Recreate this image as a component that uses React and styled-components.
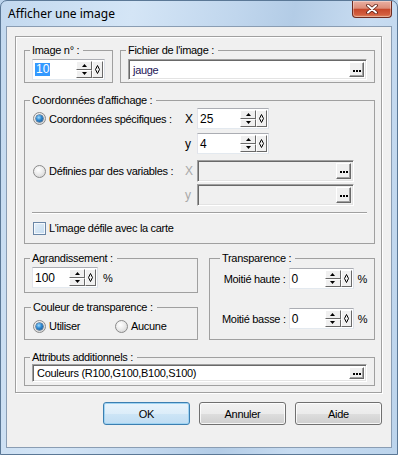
import styled, { createGlobalStyle } from "styled-components";

const GlobalStyle = createGlobalStyle`
  html, body {
    margin: 0;
    padding: 0;
    background: #bcd4ec;
  }
  body {
    font-family: "Liberation Sans", Arial, sans-serif;
    font-size: 11px;
    letter-spacing: -0.3px;
    color: #000;
  }
  * {
    box-sizing: border-box;
  }
`;

const Window = styled.div`
  width: 398px;
  height: 455px;
  display: flex;
  flex-direction: column;
  border: 1px solid #5b7896;
  border-radius: 7px 7px 0 0;
  background: linear-gradient(100deg, #c3d9ef 0%, #d4e5f6 28%, #c0d6ed 50%, #b3cce6 62%, #c8dcf1 78%, #bcd4ec 100%);
  overflow: hidden;
`;

const TitleBar = styled.div`
  height: 25px;
  flex: none;
  display: flex;
  align-items: flex-start;
  justify-content: space-between;
  padding-left: 7px;
`;

const Title = styled.span`
  font: 12px/25px "Noto Sans", "Open Sans", sans-serif;
  letter-spacing: 0;
  color: #000;
`;

const CloseButton = styled.div`
  width: 40px;
  height: 17px;
  margin-right: 5px;
  border: 1px solid #6e2b20;
  border-top: none;
  border-radius: 0 0 4px 4px;
  background: linear-gradient(#eab0a2 0%, #dc8d79 45%, #c7482b 52%, #d35f3f 85%, #e08a62 100%);
  box-shadow: inset 0 0 0 1px rgba(255, 255, 255, 0.35);
  display: flex;
  align-items: center;
  justify-content: center;
`;

const Client = styled.div`
  flex: 1;
  margin: 0 5px 6px 5px;
  border: 1px solid #8a9db3;
  background: #f0f0f0;
  display: flex;
  flex-direction: column;
  padding: 9px 9px 0 8px;
`;

const Panel = styled.div`
  border: 1px solid #a0a0a0;
  box-shadow: inset 1px 1px 0 #fff, 1px 1px 0 #fff;
  padding: 7px 6px 6px 8px;
  display: flex;
  flex-direction: column;
`;

const Row = styled.div`
  display: flex;
  gap: ${p => p.$gap || 0}px;
  margin-top: ${p => p.$mt || 0}px;
  align-items: stretch;
`;

const Column = styled.div`
  display: flex;
  flex-direction: column;
  gap: ${p => p.$gap || 0}px;
  width: ${p => p.$w}px;
`;

const Group = styled.fieldset`
  margin: 0;
  min-width: 0;
  width: ${p => (p.$w ? `${p.$w}px` : "auto")};
  flex: ${p => (p.$w ? "none" : 1)};
  padding: ${p => p.$pad || "2px 7px 2px 7px"};
  border: 1px solid #a0a0a0;
  display: flex;
  flex-direction: column;
  justify-content: ${p => p.$justify || "flex-start"};
`;

const Legend = styled.legend`
  padding: 0 4px 0 2px;
  margin-left: -2px;
  font-size: 11px;
  line-height: 13px;
  color: #000;
`;

const SpinBox = styled.div`
  width: ${p => p.$w}px;
  height: 21px;
  flex: none;
  display: flex;
  background: #fff;
  border: 1px solid;
  border-color: #abadb3 #dbdfe6 #e3e9ef #e2e3ea;
  padding: 1px;
`;

const SpinValue = styled.div`
  flex: 1;
  display: flex;
  align-items: center;
  padding-left: 1px;
  font-size: 12px;
  letter-spacing: 0;
  color: #000;
`;

const Selected = styled.span`
  background: #3399ff;
  color: #fff;
  line-height: 13px;
  padding: 0 1px;
`;

const Arrows = styled.div`
  width: 16px;
  display: flex;
  flex-direction: column;
`;

const ArrowButton = styled.div`
  flex: 1;
  background: #f0f0f0;
  border: 1px solid;
  border-color: #fff #696969 #696969 #fff;
  display: flex;
  align-items: center;
  justify-content: center;
`;

const ExtraButton = styled(ArrowButton)`
  flex: none;
  width: 11px;
`;

const Field = styled.div`
  width: ${p => (p.$w ? `${p.$w}px` : "auto")};
  flex: ${p => (p.$w ? "none" : 1)};
  height: ${p => p.$h || 21}px;
  display: flex;
  background: ${p => (p.$disabled ? "#f0f0f0" : "#fff")};
  border: 1px solid;
  border-color: #a0a0a0 #fff #fff #a0a0a0;
  box-shadow: inset 1px 1px 0 #696969, inset -1px -1px 0 #e3e3e3;
  padding: 2px;
`;

const FieldText = styled.div`
  flex: 1;
  display: flex;
  align-items: center;
  padding-left: 2px;
  font-size: 11px;
  color: ${p => p.$color || "#000"};
`;

const DotsButton = styled.div`
  width: 15px;
  flex: none;
  background: #f0f0f0;
  border: 1px solid;
  border-color: #fff #696969 #696969 #fff;
  box-shadow: inset -1px -1px 0 #a0a0a0;
  display: flex;
  align-items: center;
  justify-content: center;
  gap: 1px;
  padding-top: 2px;
`;

const Dot = styled.span`
  width: 2px;
  height: 2px;
  background: #000;
`;

const OptionLine = styled.div`
  display: flex;
  align-items: center;
  height: ${p => p.$h || 21}px;
  margin-top: ${p => p.$mt || 0}px;
`;

const OptionCell = styled.div`
  width: ${p => (p.$auto ? "auto" : "153px")};
  display: flex;
  align-items: center;
  gap: 3px;
  padding-left: 1px;
`;

const Axis = styled.span`
  width: 12px;
  font-size: 12px;
  color: ${p => (p.$disabled ? "#a8a8a8" : "#000")};
`;

const Radio = styled.span`
  width: 13px;
  height: 13px;
  flex: none;
  border-radius: 50%;
  border: 1px solid #8a8a8a;
  background: radial-gradient(circle at 40% 35%, #ffffff 0%, #ececec 45%, #cdcdcd 100%);
  display: flex;
  align-items: center;
  justify-content: center;
  &::after {
    content: "";
    display: ${p => (p.$checked ? "block" : "none")};
    width: 7px;
    height: 7px;
    border-radius: 50%;
    background: radial-gradient(circle at 40% 35%, #9fdcff 0%, #2c86cf 45%, #0f4c86 100%);
    box-shadow: 0 0 0 0.5px #0d3560;
  }
`;

const Choice = styled.label`
  display: flex;
  align-items: center;
  gap: 3px;
  width: ${p => (p.$w ? `${p.$w}px` : "auto")};
`;

const CheckBox = styled.span`
  width: 13px;
  height: 13px;
  flex: none;
  border: 1px solid #6a86a6;
  background: linear-gradient(135deg, #e4eff9 0%, #c4dbef 100%);
  box-shadow: inset 0 0 0 1px #f4f8fc;
`;

const Separator = styled.div`
  height: 2px;
  margin-top: 6px;
  border-top: 1px solid #a0a0a0;
  border-bottom: 1px solid #fff;
`;

const Unit = styled.span`
  margin-left: ${p => p.$ml || 5}px;
  font-size: 11px;
`;

const TransLine = styled.div`
  display: flex;
  align-items: center;
  gap: 3px;
`;

const TransLabel = styled.span`
  width: 64px;
  text-align: right;
  white-space: nowrap;
`;

const ButtonBar = styled.div`
  display: flex;
  justify-content: flex-end;
  gap: 9px;
  margin-top: 9px;
`;

const DialogButton = styled.div`
  width: 87px;
  height: 23px;
  border-radius: 3px;
  border: 1px solid ${p => (p.$default ? "#3c7fb1" : "#707070")};
  background: ${p =>
    p.$default
      ? "linear-gradient(#e9f4fc 0%, #dcedf9 50%, #cde5f6 52%, #c0ddf3 100%)"
      : "linear-gradient(#f2f2f2 0%, #ebebeb 50%, #dddddd 52%, #cfcfcf 100%)"};
  box-shadow: inset 0 0 0 1px ${p => (p.$default ? "#9fd3f2" : "rgba(255,255,255,0.8)")};
  display: flex;
  align-items: center;
  justify-content: center;
  font-size: 11px;
  color: #000;
`;

const CloseIcon = () => (
  <svg width="12" height="10" viewBox="0 0 12 10">
    <path d="M2 1.5 L10 8.5 M10 1.5 L2 8.5" stroke="#5a1e14" strokeWidth="3.6" strokeLinecap="round" />
    <path d="M2 1.5 L10 8.5 M10 1.5 L2 8.5" stroke="#fff" strokeWidth="2" strokeLinecap="round" />
  </svg>
);

const Triangle = ({ down }) => (
  <svg width="5" height="3" viewBox="0 0 5 3">
    <polygon points={down ? "0,0 5,0 2.5,3" : "0,3 5,3 2.5,0"} fill="#000" />
  </svg>
);

const Diamond = () => (
  <svg width="5" height="9" viewBox="0 0 5 9">
    <path d="M2.5 0.5 L4.5 4.5 L2.5 8.5 L0.5 4.5 Z" fill="none" stroke="#000" strokeWidth="1" />
  </svg>
);

const Spin = ({ w, children }) => (
  <SpinBox $w={w}>
    <SpinValue>{children}</SpinValue>
    <Arrows>
      <ArrowButton><Triangle /></ArrowButton>
      <ArrowButton><Triangle down /></ArrowButton>
    </Arrows>
    <ExtraButton><Diamond /></ExtraButton>
  </SpinBox>
);

const Dots = () => (
  <DotsButton>
    <Dot />
    <Dot />
    <Dot />
  </DotsButton>
);

const App = () => (
  <>
    <GlobalStyle />
    <Window>
      <TitleBar>
        <Title>Afficher une image</Title>
        <CloseButton><CloseIcon /></CloseButton>
      </TitleBar>
      <Client>
        <Panel>
          <Row $gap={7}>
            <Group $w={89}>
              <Legend>Image n° :</Legend>
              <Spin w={73}><Selected>10</Selected></Spin>
            </Group>
            <Group>
              <Legend>Fichier de l'image :</Legend>
              <Field>
                <FieldText $color="#1c1456">jauge</FieldText>
                <Dots />
              </Field>
            </Group>
          </Row>

          <Row $mt={11}>
            <Group $pad="1px 7px 7px 7px">
              <Legend>Coordonnées d'affichage :</Legend>
              <OptionLine>
                <OptionCell><Radio $checked />Coordonnées spécifiques :</OptionCell>
                <Axis>X</Axis>
                <Spin w={72}>25</Spin>
              </OptionLine>
              <OptionLine $mt={4}>
                <OptionCell />
                <Axis>y</Axis>
                <Spin w={72}>4</Spin>
              </OptionLine>
              <OptionLine $mt={6} $h={22}>
                <OptionCell><Radio />Définies par des variables :</OptionCell>
                <Axis $disabled>X</Axis>
                <Field $w={157} $h={22} $disabled>
                  <FieldText />
                  <Dots />
                </Field>
              </OptionLine>
              <OptionLine $mt={2} $h={22}>
                <OptionCell />
                <Axis $disabled>y</Axis>
                <Field $w={157} $h={22} $disabled>
                  <FieldText />
                  <Dots />
                </Field>
              </OptionLine>
              <Separator />
              <OptionLine $mt={6} $h={16}>
                <OptionCell $auto>
                  <CheckBox />L'image défile avec la carte
                </OptionCell>
              </OptionLine>
            </Group>
          </Row>

          <Row $mt={8} $gap={11}>
            <Column $w={174} $gap={8}>
              <Group $pad="2px 7px 4px 7px">
                <Legend>Agrandissement :</Legend>
                <OptionLine>
                  <Spin w={66}>100</Spin>
                  <Unit>%</Unit>
                </OptionLine>
              </Group>
              <Group $pad="4px 7px 5px 8px">
                <Legend>Couleur de transparence :</Legend>
                <OptionLine $h={16}>
                  <Choice $w={82}><Radio $checked />Utiliser</Choice>
                  <Choice><Radio />Aucune</Choice>
                </OptionLine>
              </Group>
            </Column>
            <Group $pad="3px 7px 10px 12px" $justify="space-between">
              <Legend>Transparence :</Legend>
              <TransLine>
                <TransLabel>Moitié haute :</TransLabel>
                <Spin w={65}>0</Spin>
                <Unit $ml={1}>%</Unit>
              </TransLine>
              <TransLine>
                <TransLabel>Moitié basse :</TransLabel>
                <Spin w={65}>0</Spin>
                <Unit $ml={1}>%</Unit>
              </TransLine>
            </Group>
          </Row>

          <Row $mt={11}>
            <Group $pad="0 7px 3px 7px">
              <Legend>Attributs additionnels :</Legend>
              <Field>
                <FieldText>Couleurs (R100,G100,B100,S100)</FieldText>
                <Dots />
              </Field>
            </Group>
          </Row>
        </Panel>

        <ButtonBar>
          <DialogButton $default>OK</DialogButton>
          <DialogButton>Annuler</DialogButton>
          <DialogButton>Aide</DialogButton>
        </ButtonBar>
      </Client>
    </Window>
  </>
);

export default App;
